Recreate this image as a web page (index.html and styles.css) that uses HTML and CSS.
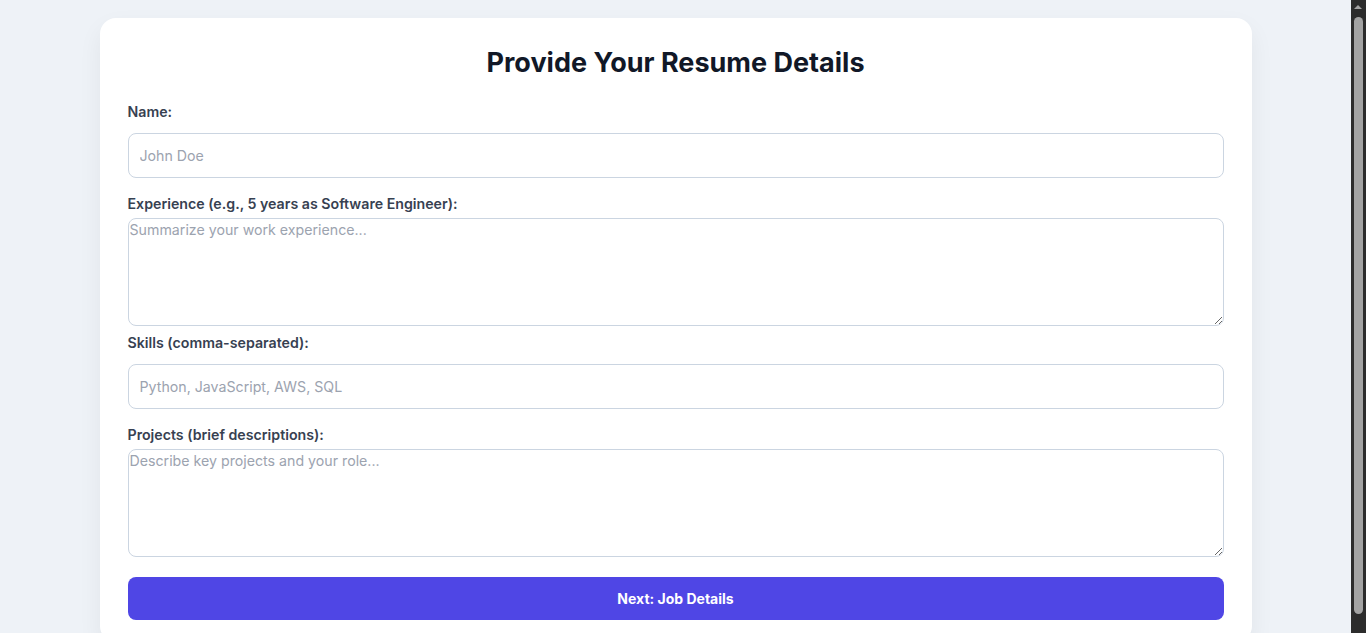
FILE: index.html
```html
<!DOCTYPE html>
<html lang="en">
<head>
<meta charset="utf-8">
<title>Resume Details</title>
<link rel="stylesheet" href="styles.css">
</head>
<body>
<main class="card">
  <h1 class="title">Provide Your Resume Details</h1>
  <form class="form">
    <label class="label" for="name">Name:</label>
    <input class="input" id="name" type="text" placeholder="John Doe">
    <label class="label" for="exp">Experience (e.g., 5 years as Software Engineer):</label>
    <textarea class="textarea" id="exp" placeholder="Summarize your work experience..."></textarea>
    <label class="label" for="skills">Skills (comma-separated):</label>
    <input class="input" id="skills" type="text" placeholder="Python, JavaScript, AWS, SQL">
    <label class="label" for="proj">Projects (brief descriptions):</label>
    <textarea class="textarea textarea-last" id="proj" placeholder="Describe key projects and your role..."></textarea>
    <button class="button" type="button">Next: Job Details</button>
  </form>
</main>
<div class="scrollbar" aria-hidden="true">
  <span class="scroll-arrow"></span>
  <span class="scroll-thumb"></span>
</div>
</body>
</html>
```
FILE: styles.css
```css
* { box-sizing: border-box; }
html, body { margin: 0; }
html { background: #eef2f7; }
body {
  background: #eef2f7;
  font-family: Inter, "Noto Sans", sans-serif;
  color: #1f2937;
  padding: 18px 15px 0 0;
}
.card {
  max-width: 1152px;
  margin: 0 auto;
  background: #ffffff;
  border-radius: 16px;
  box-shadow: 0 10px 25px rgba(15, 23, 42, 0.06);
  padding: 28px 28px 22px;
}
.title {
  margin: 0 0 22px;
  text-align: center;
  font-size: 27px;
  font-weight: 700;
  line-height: 34px;
  color: #111827;
}
.form { display: flex; flex-direction: column; }
.label {
  display: block;
  font-size: 14.2px;
  font-weight: 600;
  line-height: 20px;
  color: #374151;
}
.input {
  display: block;
  width: 100%;
  height: 45px;
  margin: 11px 0 16px;
  padding: 0 11px;
  border: 1px solid #cbd5e1;
  border-radius: 8px;
  font-family: Inter, "Noto Sans", sans-serif;
  font-size: 14.2px;
  color: #111827;
  background: #fff;
}
.textarea {
  display: block;
  width: 100%;
  height: 108px;
  margin: 4px 0 7px;
  padding: 2px 1px;
  border: 1px solid #cbd5e1;
  border-radius: 8px;
  font-family: Inter, "Noto Sans", sans-serif;
  font-size: 14.2px;
  color: #111827;
  background: #fff;
  resize: vertical;
}
.input::placeholder, .textarea::placeholder { color: #9ca3af; }
.textarea-last { margin-bottom: 20px; }
.button {
  display: block;
  width: 100%;
  height: 43px;
  border: 0;
  border-radius: 8px;
  background: #4f46e5;
  color: #ffffff;
  font-family: Inter, "Noto Sans", sans-serif;
  font-size: 14px;
  font-weight: 700;
}

/* browser scrollbar strip as seen in the capture */
.scrollbar {
  position: fixed;
  top: 0;
  right: 0;
  width: 15px;
  height: 100vh;
  background: #2c2c2c;
}
.scroll-arrow {
  position: absolute;
  top: 5px;
  left: 3px;
  width: 0;
  height: 0;
  border-left: 4.5px solid transparent;
  border-right: 4.5px solid transparent;
  border-bottom: 4px solid #a3a3a3;
}
.scroll-thumb {
  position: absolute;
  top: 17px;
  left: 3px;
  width: 9px;
  height: 597px;
  border-radius: 5px;
  background: #a3a3a3;
}
```
